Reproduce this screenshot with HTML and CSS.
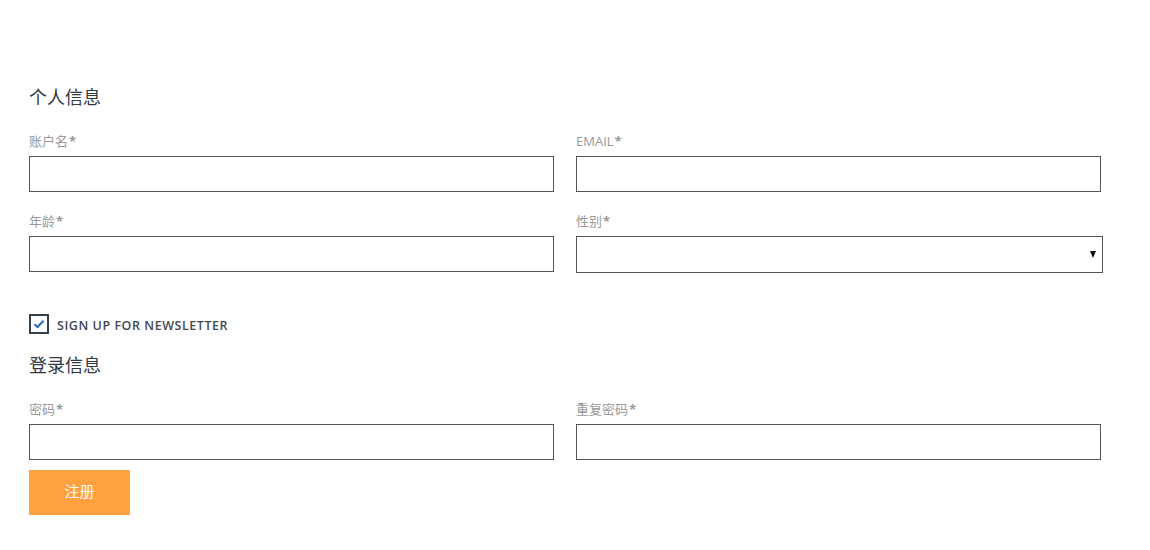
FILE: index.html
```html
<!DOCTYPE html>
<html lang="zh">
<head>
<meta charset="utf-8">
<title>注册</title>
<link rel="stylesheet" href="styles.css">
</head>
<body>
<form class="form">
  <h2 class="section-title">个人信息</h2>
  <div class="grid">
    <div class="field">
      <label class="label">账户名<span class="req">*</span></label>
      <input class="input" type="text">
    </div>
    <div class="field">
      <label class="label">EMAIL<span class="req">*</span></label>
      <input class="input" type="text">
    </div>
    <div class="field">
      <label class="label">年龄<span class="req">*</span></label>
      <input class="input" type="text">
    </div>
    <div class="field">
      <label class="label">性别<span class="req">*</span></label>
      <div class="select-wrap">
        <select class="select"><option></option></select>
        <span class="arrow"></span>
      </div>
    </div>
  </div>
  <label class="check">
    <span class="box"><svg width="12" height="10" viewBox="0 0 12 10"><path d="M1.5 5.2 L4.5 8 L10.5 1.8" fill="none" stroke="#2a6fb5" stroke-width="2.2"/></svg></span>
    <span class="check-text">SIGN UP FOR NEWSLETTER</span>
  </label>
  <h2 class="section-title second">登录信息</h2>
  <div class="grid">
    <div class="field">
      <label class="label">密码<span class="req">*</span></label>
      <input class="input" type="password">
    </div>
    <div class="field">
      <label class="label">重复密码<span class="req">*</span></label>
      <input class="input" type="password">
    </div>
  </div>
  <button class="btn" type="button">注册</button>
</form>
</body>
</html>
```
FILE: styles.css
```css
html, body {
  margin: 0;
  padding: 0;
  background: #fff;
}
body {
  font-family: "Open Sans", "Noto Sans CJK SC", sans-serif;
}
.form {
  padding: 85px 0 0 29px;
  width: 1074px;
}
.section-title {
  margin: 0;
  font-size: 18px;
  line-height: 24px;
  font-weight: normal;
  color: #2f3a44;
}
.section-title.second {
  margin-top: 19px;
}
.grid {
  display: grid;
  grid-template-columns: 525px 527px;
  column-gap: 22px;
  row-gap: 20px;
  margin-top: 23px;
}
.section-title.second + .grid {
  margin-top: 23px;
}
.field {
  display: flex;
  flex-direction: column;
}
.label {
  font-size: 13px;
  line-height: 18px;
  color: #999;
  margin-bottom: 6px;
}
.req {
  color: #999;
  font-weight: 700;
  margin-left: 1px;
}
.input {
  width: 525px;
  height: 36px;
  box-sizing: border-box;
  border: 1px solid #555;
  border-radius: 0;
  margin: 0;
  padding: 0 8px;
  font: inherit;
  outline: none;
}
.select-wrap {
  position: relative;
  width: 527px;
}
.select {
  appearance: none;
  -webkit-appearance: none;
  width: 527px;
  height: 37px;
  box-sizing: border-box;
  border: 1px solid #555;
  border-radius: 0;
  background: #fff;
  margin: 0;
  outline: none;
}
.arrow {
  position: absolute;
  right: 7px;
  top: 15px;
  width: 0;
  height: 0;
  border-left: 3.5px solid transparent;
  border-right: 3.5px solid transparent;
  border-top: 7px solid #111;
}
.check {
  display: flex;
  align-items: flex-start;
  gap: 8px;
  height: 20px;
  margin-top: 41px;
}
.box {
  width: 20px;
  height: 20px;
  box-sizing: border-box;
  border: 2px solid #34404a;
  display: flex;
  align-items: center;
  justify-content: center;
}
.check-text {
  font-size: 12.5px;
  font-weight: 600;
  letter-spacing: 0.55px;
  color: #454a50;
  line-height: 16px;
  padding-top: 4px;
}
.btn {
  display: block;
  margin-top: 10px;
  width: 101px;
  height: 45px;
  border: 0;
  border-radius: 0;
  background: #ffa041;
  color: #fff;
  font-family: "Noto Sans CJK SC", sans-serif;
  font-size: 15px;
  padding: 0 0 4px;
}
```
